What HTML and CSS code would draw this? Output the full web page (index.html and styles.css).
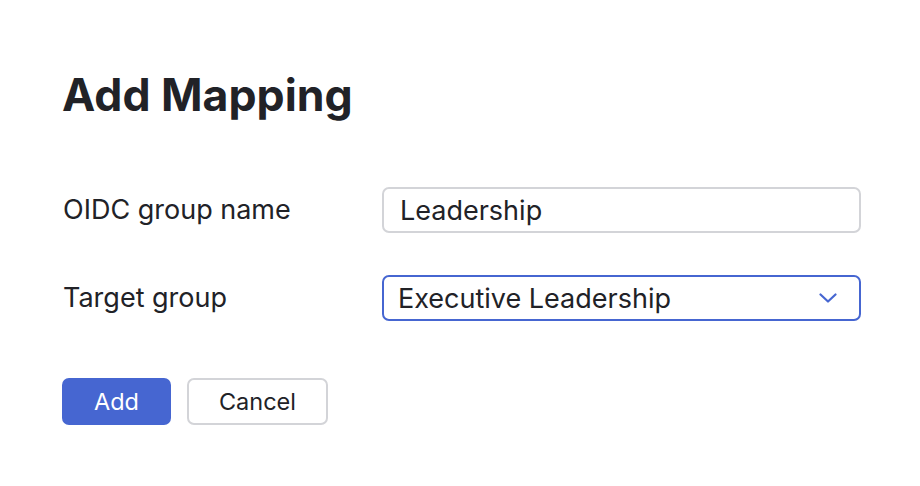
FILE: index.html
```html
<!DOCTYPE html>
<html>
<head>
<meta charset="utf-8">
<link rel="stylesheet" href="styles.css">
</head>
<body>
<div class="dialog">
  <h1 class="title">Add Mapping</h1>
  <div class="form">
    <div class="row">
      <label class="label">OIDC group name</label>
      <div class="field input"><span>Leadership</span></div>
    </div>
    <div class="row">
      <label class="label">Target group</label>
      <div class="field select">
        <span>Executive Leadership</span>
        <svg class="chev" width="18" height="10" viewBox="0 0 18 10"><path d="M1.5 1.5 L9 8.5 L16.5 1.5" fill="none" stroke="#4666d1" stroke-width="2.2" stroke-linecap="round" stroke-linejoin="round"/></svg>
      </div>
    </div>
  </div>
  <div class="actions">
    <button class="btn primary">Add</button>
    <button class="btn secondary">Cancel</button>
  </div>
</div>
</body>
</html>
```
FILE: styles.css
```css
html, body {
  margin: 0;
  padding: 0;
  background: #ffffff;
}
body {
  font-family: Inter, "Noto Sans", sans-serif;
  color: #212227;
}
.dialog {
  padding: 68px 59px 0 62px;
}
.title {
  margin: 0;
  font-size: 44.6px;
  font-weight: 700;
  line-height: 54px;
  letter-spacing: 0;
}
.form {
  margin-top: 65px;
  display: flex;
  flex-direction: column;
  gap: 42px;
}
.row {
  display: grid;
  grid-template-columns: 320px 479px;
  align-items: center;
}
.label {
  font-size: 27px;
  line-height: 32px;
  padding-left: 1px;
}
.field {
  box-sizing: border-box;
  height: 46px;
  border-radius: 7px;
  display: flex;
  align-items: center;
  font-size: 27px;
}
.input {
  border: 2px solid #d3d4d8;
  padding-left: 16px;
}
.select {
  border: 2px solid #4666d1;
  padding-left: 14px;
  padding-right: 22px;
  justify-content: space-between;
}
.chev {
  display: block;
}
.actions {
  margin-top: 57px;
  display: flex;
  gap: 16px;
}
.btn {
  box-sizing: border-box;
  height: 47px;
  border-radius: 7px;
  font-family: Inter, "Noto Sans", sans-serif;
  font-size: 23.5px;
  padding: 0;
  cursor: pointer;
}
.primary {
  width: 109px;
  background: #4666d1;
  border: none;
  color: #ffffff;
}
.secondary {
  width: 141px;
  background: #ffffff;
  border: 2px solid #d3d4d8;
  color: #212227;
}
```
